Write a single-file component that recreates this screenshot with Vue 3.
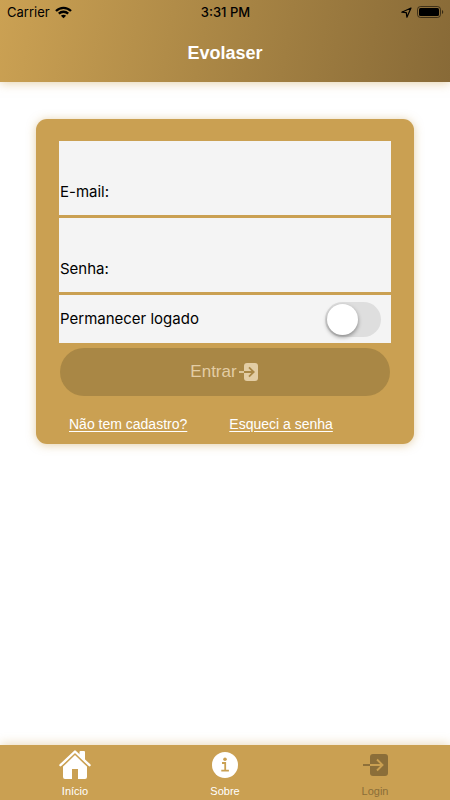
<script setup>
import { ref } from 'vue'

const email = ref('')
const password = ref('')
const remember = ref(false)
</script>

<template>
  <div class="page">
    <header class="header">
      <div class="status">
        <div class="side">
          <span>Carrier</span>
          <svg width="17" height="13" viewBox="0 0 17 13" fill="none" stroke="#000" stroke-width="2.3" aria-hidden="true">
            <path d="M1 5C5.2.7 11.800 .7 16 5" />
            <path d="M3.800 7.700c2.700-2.600 6.700-2.600 9.400 0" />
            <path d="M8.500 12.300 5.900 9.700c1.500-1.300 3.700-1.300 5.200 0z" fill="#000" stroke="none" />
          </svg>
        </div>
        <span class="time">3:31 PM</span>
        <div class="side end">
          <svg width="11" height="11" viewBox="0 0 11 11" fill="none" stroke="#000" stroke-width="1.200" stroke-linejoin="round" aria-hidden="true">
            <path d="M10 1 .8 5.200l4.500.5.600 4.500z" />
          </svg>
          <svg width="27" height="12" viewBox="0 0 27 12" aria-hidden="true">
            <rect x=".5" y=".5" width="23" height="11" rx="3" fill="none" stroke="#000" stroke-opacity=".55" />
            <rect x="2" y="2" width="20" height="8" rx="1.500" />
            <path d="M25 4c1.700.6 1.700 3.400 0 4z" fill-opacity=".6" />
          </svg>
        </div>
      </div>
      <h1 class="title">Evolaser</h1>
    </header>

    <main class="content">
      <form class="card" @submit.prevent>
        <div class="field">
          <label for="email">E-mail:</label>
          <input id="email" v-model="email" type="email" />
        </div>
        <div class="field">
          <label for="password">Senha:</label>
          <input id="password" v-model="password" type="password" />
        </div>
        <div class="field toggle-row">
          <label for="remember">Permanecer logado</label>
          <input id="remember" v-model="remember" class="toggle" type="checkbox" role="switch" />
        </div>
        <button class="submit" type="submit" disabled>
          <span>Entrar</span>
          <svg width="19" height="18" viewBox="0 0 19 18" fill="none" aria-hidden="true">
            <rect x="5" y="0" width="14" height="18" rx="3" fill="#e3cda4" />
            <path d="M0 9h5" stroke="#e3cda4" stroke-width="1.800" />
            <path d="M5 9h9.500M10 4.300 14.700 9 10 13.700" stroke="#a98745" stroke-width="1.800" />
          </svg>
        </button>
        <nav class="links">
          <a href="#cadastro">Não tem cadastro?</a>
          <a href="#senha">Esqueci a senha</a>
        </nav>
      </form>
    </main>

    <nav class="tabs">
      <a class="tab" href="#inicio">
        <svg width="32" height="30" viewBox="0 0 32 30" aria-hidden="true">
          <path d="M4 15.500 16 4l12 11.500V27a2 2 0 0 1-2 2h-7V19h-6v10H6a2 2 0 0 1-2-2z" fill="#fff" />
          <path d="M1.500 16 16 2l14.500 14" fill="none" stroke="#caa052" stroke-width="4.500" />
          <path d="M20.500 2a1 1 0 0 1 1-1H25a1 1 0 0 1 1 1v9l-5.500-5z" fill="#fff" />
          <path d="M1.500 15.200 16 1.500l14.500 13.700" fill="none" stroke="#fff" stroke-width="2.400" stroke-linecap="round" stroke-linejoin="round" />
        </svg>
        <span>Início</span>
      </a>
      <a class="tab" href="#sobre">
        <svg width="26" height="30" viewBox="0 0 26 30" aria-hidden="true">
          <circle cx="13" cy="15" r="13" fill="#fff" />
          <circle cx="13" cy="9.200" r="1.800" fill="#caa052" />
          <path d="M10 13h3.200v7.500M9.300 20.700h7.600" fill="none" stroke="#caa052" stroke-width="1.800" />
        </svg>
        <span>Sobre</span>
      </a>
      <a class="tab muted" href="#login">
        <svg width="25" height="30" viewBox="0 0 25 30" fill="none" aria-hidden="true">
          <rect x="7" y="4" width="18" height="22" rx="3" fill="#8b6e39" />
          <path d="M0 15h7" stroke="#8b6e39" stroke-width="1.900" />
          <path d="M7 15h12.500M14 9.500l5.500 5.500-5.500 5.500" stroke="#caa052" stroke-width="1.900" />
        </svg>
        <span>Login</span>
      </a>
    </nav>
  </div>
</template>

<style>
body {
  margin: 0;
  background: #fff;
}
</style>

<style scoped>
.page {
  display: flex;
  flex-direction: column;
  min-height: 100vh;
  font-family: "Liberation Sans", Arial, sans-serif;
  color: #000;
}

.header {
  padding-bottom: 17px;
  background: linear-gradient(100deg, #cba153, #ac8846 45%, #886a37);
  box-shadow: 0 1px 10px rgba(202, 160, 82, 0.5);
}

.status {
  display: flex;
  align-items: center;
  height: 24px;
  padding: 0 6px 0 7px;
  font-family: Inter, sans-serif;
  font-size: 13px;
}

.side {
  display: flex;
  flex: 1;
  align-items: center;
  gap: 5px;
}

.end {
  justify-content: flex-end;
}

.time {
  font-weight: 500;
}

.title {
  margin: 17px 0 0;
  color: #fff;
  font-size: 18px;
  font-weight: 700;
  line-height: 24px;
  text-align: center;
}

.content {
  flex: 1;
  padding: 37px 36px;
}

.card {
  display: flex;
  flex-direction: column;
  gap: 3px;
  padding: 22px 23px 10px;
  border-radius: 11px;
  background: #caa052;
  box-shadow: 0 1px 10px rgba(202, 160, 82, 0.5);
}

.field {
  display: flex;
  align-items: flex-end;
  box-sizing: border-box;
  height: 74px;
  padding: 0 1px 11px;
  background: #f4f4f4;
  font-family: Inter, sans-serif;
  font-size: 15px;
  line-height: 24px;
}

.field input:not(.toggle) {
  flex: 1;
  min-width: 0;
  height: 24px;
  padding: 0 8px;
  border: 0;
  outline: 0;
  background: transparent;
  font: inherit;
}

.toggle-row {
  align-items: center;
  justify-content: space-between;
  height: 48px;
  padding: 0 10px 0 1px;
}

.toggle {
  display: flex;
  align-items: center;
  appearance: none;
  width: 56px;
  height: 35px;
  margin: 0;
  padding: 0 2px;
  border-radius: 18px;
  background: #dedede;
}

.toggle::before {
  width: 31px;
  height: 31px;
  border-radius: 50%;
  background: #fff;
  box-shadow: 0 2px 4px rgba(0, 0, 0, 0.4);
  content: "";
}

.toggle:checked {
  justify-content: flex-end;
  background: #8b6e39;
}

.submit {
  display: flex;
  align-items: center;
  justify-content: center;
  gap: 2px;
  height: 48px;
  margin: 2px 1px 0;
  padding: 0 2px 0 0;
  border: 0;
  border-radius: 24px;
  background: #a98745;
  color: #e3cda4;
  font-family: "Liberation Sans", Arial, sans-serif;
  font-size: 17px;
}

.links {
  display: flex;
  gap: 42px;
  margin-top: 15px;
  padding: 0 10px;
  font-size: 14px;
  line-height: 20px;
}

.links a {
  color: #fff;
  text-underline-offset: 2px;
}

.tabs {
  display: grid;
  grid-template-columns: repeat(3, 1fr);
  background: #caa052;
  box-shadow: 0 -1px 10px rgba(202, 160, 82, 0.4);
}

.tab {
  display: flex;
  flex-direction: column;
  align-items: center;
  gap: 4px;
  padding: 5px 0 2px;
  color: #fff;
  font-size: 11px;
  line-height: 14px;
  text-decoration: none;
}

.muted {
  color: #8b6e39;
}
</style>
